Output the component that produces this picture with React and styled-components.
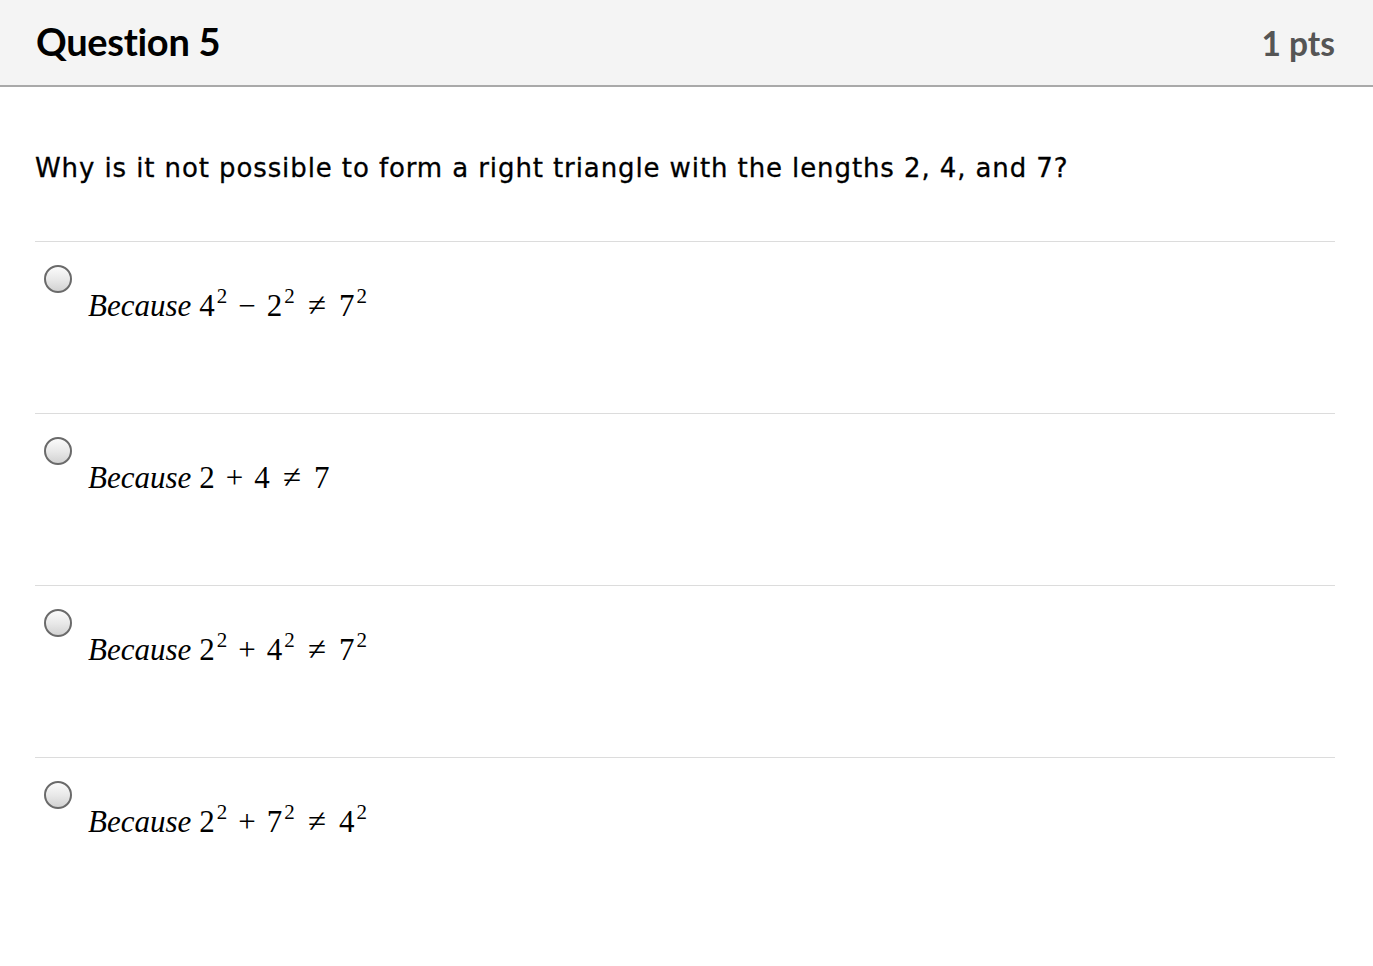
import React from "react";
import styled, { createGlobalStyle } from "styled-components";

const Global = createGlobalStyle`
  html, body { margin: 0; padding: 0; background: #fff; }
  body { font-family: "Lato", "Liberation Sans", sans-serif; color: #000; }
`;

const Page = styled.div`
  width: 1373px;
  min-height: 966px;
  background: #fff;
`;

const Header = styled.header`
  height: 85px;
  background: #f4f4f4;
  border-bottom: 2px solid #a9a9a9;
  display: flex;
  align-items: center;
  justify-content: space-between;
  padding: 0 38px 0 36px;
  box-sizing: content-box;
`;

const Title = styled.h2`
  margin: 0;
  font-family: "Lato", sans-serif;
  font-weight: 700;
  font-size: 38px;
  color: #000;
  letter-spacing: -0.3px;
  position: relative;
  top: -2px;
`;

const Points = styled.div`
  font-family: "Lato", sans-serif;
  font-weight: 700;
  font-size: 33.5px;
  color: #555;
`;

const Body = styled.div`
  padding: 0 38px 0 35px;
`;

const QuestionText = styled.p`
  margin: 0;
  height: 154px;
  display: flex;
  align-items: center;
  padding-top: 8px;
  box-sizing: border-box;
  font-family: "DejaVu Sans", sans-serif;
  font-weight: 400;
  font-size: 26px;
  letter-spacing: 0.9px;
  color: #000;
  -webkit-text-stroke: 0.3px #000;
`;

const Answer = styled.label`
  display: flex;
  align-items: flex-start;
  box-sizing: border-box;
  height: 172px;
  border-top: 1px solid #dcdcdc;
  padding: 23px 0 0 9px;
`;

const Radio = styled.span`
  flex: none;
  width: 24px;
  height: 24px;
  border-radius: 50%;
  border: 2px solid #6a6a6a;
  background: linear-gradient(180deg, #fbfbfb 0%, #e9e9e9 50%, #d2d2d2 100%);
`;

const Formula = styled.span`
  margin: 20px 0 0 16px;
  font-family: "Liberation Serif", "Times New Roman", serif;
  font-size: 31px;
  line-height: 40px;
  color: #000;
  white-space: nowrap;
`;

const Var = styled.span`
  font-style: italic;
  margin-right: 8px;
`;

const Sup = styled.span`
  display: inline-block;
  font-size: 21px;
  line-height: 1;
  vertical-align: 13px;
  margin-left: 2px;
`;

const Op = styled.span`
  display: inline-block;
  font-size: ${(p) => (p.$rel ? "33px" : "31px")};
  margin: 0 ${(p) => (p.$rel ? "13px" : "11px")};
`;

const Term = ({ n, s }) => (
  <>
    {n}
    {s && <Sup>{s}</Sup>}
  </>
);

const answers = [
  [["4", "2"], "−", ["2", "2"], "≠", ["7", "2"]],
  [["2"], "+", ["4"], "≠", ["7"]],
  [["2", "2"], "+", ["4", "2"], "≠", ["7", "2"]],
  [["2", "2"], "+", ["7", "2"], "≠", ["4", "2"]],
];

export default function App() {
  return (
    <Page>
      <Global />
      <Header>
        <Title>Question 5</Title>
        <Points>1 pts</Points>
      </Header>
      <Body>
        <QuestionText>
          Why is it not possible to form a right triangle with the lengths 2, 4, and 7?
        </QuestionText>
        {answers.map((a, i) => (
          <Answer key={i}>
            <Radio />
            <Formula>
              <Var>Because</Var>
              {a.map((t, j) =>
                Array.isArray(t) ? (
                  <Term key={j} n={t[0]} s={t[1]} />
                ) : (
                  <Op key={j} $rel={t === "≠"}>{t}</Op>
                )
              )}
            </Formula>
          </Answer>
        ))}
      </Body>
    </Page>
  );
}
